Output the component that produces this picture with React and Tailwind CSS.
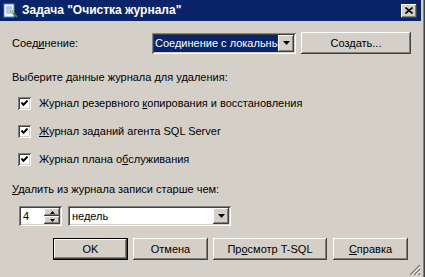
import React from 'react';

const raised = 'shadow-[inset_-1px_-1px_#404040,inset_1px_1px_#ffffff,inset_-2px_-2px_#808080,inset_2px_2px_#d4d0c8]';
const sunken = 'shadow-[inset_1px_1px_#808080,inset_-1px_-1px_#ffffff,inset_2px_2px_#404040,inset_-2px_-2px_#d4d0c8]';

function Arrow({ w = 7, h = 4 }) {
  return (
    <svg width={w} height={h} viewBox={`0 0 ${w} ${h}`}>
      <path d={`M0 0H${w}L${w / 2} ${h}Z`} fill="#000" />
    </svg>
  );
}

function DropButton() {
  return (
    <div className={`w-[16px] h-full flex items-center justify-center bg-[#d4d0c8] ${raised}`}>
      <Arrow />
    </div>
  );
}

function Check({ children }) {
  return (
    <div className="flex items-center h-[14px] ml-[6px]">
      <div className={`w-[13px] h-[13px] bg-white flex items-center justify-center ${sunken}`}>
        <svg width="7" height="7" viewBox="0 0 7 7">
          <path d="M0.5 2.5L2.5 4.8L6.6 0.6" stroke="#000" strokeWidth="2" fill="none" />
        </svg>
      </div>
      <span className="ml-[8px] leading-[14px]">{children}</span>
    </div>
  );
}

function Button({ children, w, def }) {
  return (
    <div
      className={`h-[22px] flex items-center justify-center bg-[#d4d0c8] ${def ? 'border border-black' : ''} ${raised}`}
      style={{ width: w }}
    >
      {children}
    </div>
  );
}

export default function App() {
  return (
    <div
      className="w-[425px] h-[277px] bg-[#d4d0c8] overflow-hidden relative text-[11px] text-black pr-[4px] shadow-[inset_-1px_0_#404040,inset_-2px_0_#808080]"
      style={{ fontFamily: '"Liberation Sans", Arial, sans-serif' }}
    >
      <div className="h-[21px] bg-[#0a246a] flex items-center pl-[3px] pr-[4px]">
        <svg width="16" height="16" viewBox="0 0 16 16">
          <rect x="1" y="1" width="10" height="13" fill="#fff" stroke="#5a7fc0" />
          <path d="M3 4h6M3 6h6M3 8h5M3 10h4" stroke="#6d8fd0" />
          <path d="M9 9l5 5" stroke="#3a8a3a" strokeWidth="2" />
          <circle cx="9" cy="9" r="2" fill="#8fd06a" />
        </svg>
        <span className="ml-[3px] text-white font-bold text-[12px] leading-[21px]">Задача "Очистка журнала"</span>
        <div className={`ml-auto w-[16px] h-[14px] bg-[#d4d0c8] flex items-center justify-center ${raised}`}>
          <svg width="8" height="7" viewBox="0 0 8 7">
            <path d="M0.5 0.5L7.5 6.5M7.5 0.5L0.5 6.5" stroke="#000" strokeWidth="1.6" />
          </svg>
        </div>
      </div>

      <div className="pl-[12px]">
        <div className="mt-[10px] h-[24px] flex items-center">
          <span className="w-[140px]">Соед<span className="underline">и</span>нение:</span>
          <div className={`w-[144px] h-[21px] bg-white flex items-stretch p-[2px] ${sunken}`}>
            <div className="flex-1 min-w-0 bg-[#0a246a] text-white pl-[1px] overflow-hidden whitespace-nowrap leading-[17px] text-clip">
              Соединение с локальны
            </div>
            <DropButton />
          </div>
          <div className="ml-[5px]">
            <Button w={110}>Создать...</Button>
          </div>
        </div>

        <div className="mt-[15px] leading-[14px]">Выберите данные журнала для удаления:</div>

        <div className="mt-[12px] flex flex-col gap-[14px]">
          <Check>Журнал резервного <span className="underline">к</span>опирования и восстановления</Check>
          <Check><span className="underline">Ж</span>урнал заданий агента SQL Server</Check>
          <Check>Журнал плана о<span className="underline">б</span>служивания</Check>
        </div>

        <div className="mt-[16px] leading-[14px]"><span className="underline">У</span>далить из журнала записи старше чем:</div>

        <div className="mt-[10px] flex items-center ml-[7px]">
          <div className={`w-[43px] h-[20px] bg-white flex items-stretch p-[2px] ${sunken}`}>
            <span className="flex-1 pl-[2px] leading-[16px]">4</span>
            <div className="w-[16px] flex flex-col">
              <div className={`flex-1 flex items-center justify-center bg-[#d4d0c8] ${raised}`}>
                <svg width="5" height="3" viewBox="0 0 5 3"><path d="M0 3H5L2.5 0Z" fill="#000" /></svg>
              </div>
              <div className={`flex-1 flex items-center justify-center bg-[#d4d0c8] ${raised}`}>
                <svg width="5" height="3" viewBox="0 0 5 3"><path d="M0 0H5L2.5 3Z" fill="#000" /></svg>
              </div>
            </div>
          </div>
          <div className={`ml-[6px] w-[163px] h-[20px] bg-white flex items-stretch p-[2px] ${sunken}`}>
            <span className="flex-1 pl-[2px] leading-[16px]">недель</span>
            <DropButton />
          </div>
        </div>

        <div className="mt-[12px] flex ml-[41px]">
          <Button w={75} def>OK</Button>
          <div className="ml-[5px]"><Button w={75}>Отмена</Button></div>
          <div className="ml-[5px]"><Button w={114}>Пр<span className="underline">о</span>смотр T-SQL</Button></div>
          <div className="ml-[6px]"><Button w={75}><span className="underline">С</span>правка</Button></div>
        </div>
      </div>

      <svg className="absolute right-[4px] bottom-[1px]" width="12" height="12" viewBox="0 0 12 12">
        <path d="M11 1L1 11M11 5L5 11M11 9L9 11" stroke="#808080" strokeWidth="1.4" />
        <path d="M11 3L3 11M11 7L7 11" stroke="#ffffff" strokeWidth="1" />
      </svg>
    </div>
  );
}
